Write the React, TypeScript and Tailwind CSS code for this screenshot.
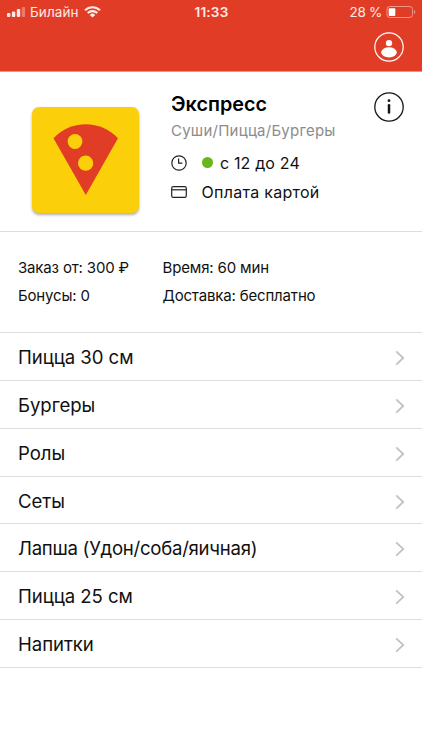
import React from 'react';
import { clsx } from 'clsx';

const categories = [
  { name: 'Пицца 30 см' },
  { name: 'Бургеры' },
  { name: 'Ролы' },
  { name: 'Сеты' },
  { name: 'Лапша (Удон/соба/яичная)', long: true },
  { name: 'Пицца 25 см' },
  { name: 'Напитки' },
];

function StatusBar() {
  return (
    <div className="grid h-6 grid-cols-3 items-center pl-[7px] pr-[6px] text-[13.5px] leading-6 text-white/90">
      <div className="flex items-center">
        <svg width="19" height="12" viewBox="0 0 19 12" fill="currentColor">
          <rect x="0" y="7" width="3.4" height="4" rx="1" />
          <rect x="4.9" y="5.4" width="3.4" height="5.6" rx="1" />
          <rect x="9.8" y="3" width="3.4" height="8" rx="1" />
          <rect x="14.7" y="1" width="3.4" height="10" rx="1" opacity="0.35" />
        </svg>
        <span className="ml-[4px] tracking-[0.1px]">Билайн</span>
        <svg className="ml-[5px]" width="17" height="12" viewBox="0 0 17 12" fill="none" stroke="currentColor" strokeWidth="2.1">
          <path d="M1 4.3a10.6 10.6 0 0 1 15 0" />
          <path d="M3.7 7.1a6.8 6.8 0 0 1 9.6 0" />
          <path d="M8.5 11.6 5.8 8.9a3.8 3.8 0 0 1 5.4 0z" fill="currentColor" stroke="none" />
        </svg>
      </div>
      <span className="text-center font-semibold tracking-[0.2px]">11:33</span>
      <div className="flex items-center justify-end">
        <span className="whitespace-nowrap tracking-[-0.3px]">28 %</span>
        <svg className="ml-[4px]" width="30" height="14" viewBox="0 0 30 14" fill="none">
          <rect x="1" y="1.5" width="25.5" height="11" rx="2.8" stroke="currentColor" strokeOpacity="0.5" />
          <rect x="2.7" y="3.2" width="6.6" height="7.8" rx="1" fill="#fff" />
          <path d="M28 5v4c1.8-.6 1.8-3.4 0-4z" fill="currentColor" fillOpacity="0.5" />
        </svg>
      </div>
    </div>
  );
}

function ProfileIcon() {
  return (
    <svg width="30" height="30" viewBox="0 0 30 30" fill="#fff">
      <circle cx="15" cy="15" r="14.2" fill="none" stroke="#fff" strokeWidth="1.2" />
      <circle cx="15" cy="11.1" r="3.2" />
      <ellipse cx="15" cy="20.3" rx="7.8" ry="5.1" />
    </svg>
  );
}

function InfoIcon() {
  return (
    <svg width="30" height="30" viewBox="0 0 30 30" fill="none" stroke="#161616">
      <circle cx="15" cy="15" r="14.2" strokeWidth="1.3" />
      <circle cx="15" cy="8.7" r="1.4" fill="#161616" stroke="none" />
      <path d="M15 13.2v7.4" strokeWidth="2.5" strokeLinecap="round" />
    </svg>
  );
}

function PizzaLogo() {
  return (
    <svg className="h-[106px] w-[107px]" viewBox="0 0 107 106" preserveAspectRatio="none">
      <path d="M21.5 31.3C38.5 12.6 69 12.6 86 31.3L53.8 88z" fill="#e03c26" />
      <circle cx="43" cy="34.5" r="7.4" fill="#fbd00b" />
      <circle cx="53.6" cy="56.2" r="7.6" fill="#fbd00b" />
    </svg>
  );
}

export default function App() {
  return (
    <div className="flex h-[750px] w-[422px] flex-col overflow-hidden bg-white font-['Inter','Liberation_Sans',sans-serif] text-[#111]">
      <header className="h-[72px] shrink-0 border-b border-[#ee8f81] bg-[#e03c26]">
        <StatusBar />
        <div className="flex justify-end pr-[18px] pt-2">
          <button aria-label="Профиль">
            <ProfileIcon />
          </button>
        </div>
      </header>

      {/* Restaurant card */}
      <section className="flex h-[160px] shrink-0 items-start border-b border-[#dedede] pl-8 pr-[18px]">
        <div className="mt-[34.5px] overflow-hidden rounded-[7px] bg-[#fbd00b] shadow-[0_2px_3px_rgba(0,0,0,0.32)]">
          <PizzaLogo />
        </div>
        <div className="ml-[32px] mt-5 flex-1 whitespace-nowrap">
          <h1 className="text-[19.8px] font-semibold leading-6 text-black">Экспресс</h1>
          <p className="mt-[3px] text-[15px] leading-6 tracking-[0.24px] text-[#8c8c8c]">Суши/Пицца/Бургеры</p>
          <div className="mt-[7.5px] flex h-6 items-center">
            <svg width="16" height="16" viewBox="0 0 16 16" fill="none" stroke="#222" strokeWidth="1.2">
              <circle cx="8" cy="8" r="7.2" />
              <path d="M7.6 3.6v4.6h3.8" />
            </svg>
            <span className="ml-[15px] h-[11px] w-[11px] rounded-full bg-[#69b51e]" />
            <span className="ml-[7px] text-base tracking-[0.15px]">с 12 до 24</span>
          </div>
          <div className="mt-[5px] flex h-6 items-center">
            <svg width="16" height="12" viewBox="0 0 16 12" fill="none" stroke="#222" strokeWidth="1.2">
              <rect x="0.7" y="0.7" width="14.6" height="10.6" rx="1.6" />
              <path d="M0.7 3.8h14.6" />
            </svg>
            <span className="ml-[14.5px] text-base tracking-[0.28px]">Оплата картой</span>
          </div>
        </div>
        <button className="mt-5" aria-label="Информация">
          <InfoIcon />
        </button>
      </section>

      {/* Delivery terms */}
      <section className="grid h-[101.3px] shrink-0 grid-cols-[144.5px_1fr] content-start border-b border-[#dedede] pl-[18px] pt-[22px] text-[15px] leading-7 tracking-[-0.16px]">
        <span>Заказ от: 300 ₽</span>
        <span>Время: 60 мин</span>
        <span>Бонусы: 0</span>
        <span>Доставка: бесплатно</span>
      </section>

      <ul>
        {categories.map(({ name, long }) => (
          <li
            key={name}
            className="flex h-[47.8px] items-center justify-between border-b border-[#dedede] pl-[18px] pr-[17px] pt-[3px] text-[18.6px]"
          >
            <span className={clsx(long ? 'tracking-[-0.27px]' : 'tracking-[-0.06px]')}>{name}</span>
            <svg width="10" height="16" viewBox="0 0 10 16" fill="none" stroke="#c2c2c2" strokeWidth="1.8">
              <path d="M1.2 1.3 8.2 8l-7 6.7" />
            </svg>
          </li>
        ))}
      </ul>
    </div>
  );
}
